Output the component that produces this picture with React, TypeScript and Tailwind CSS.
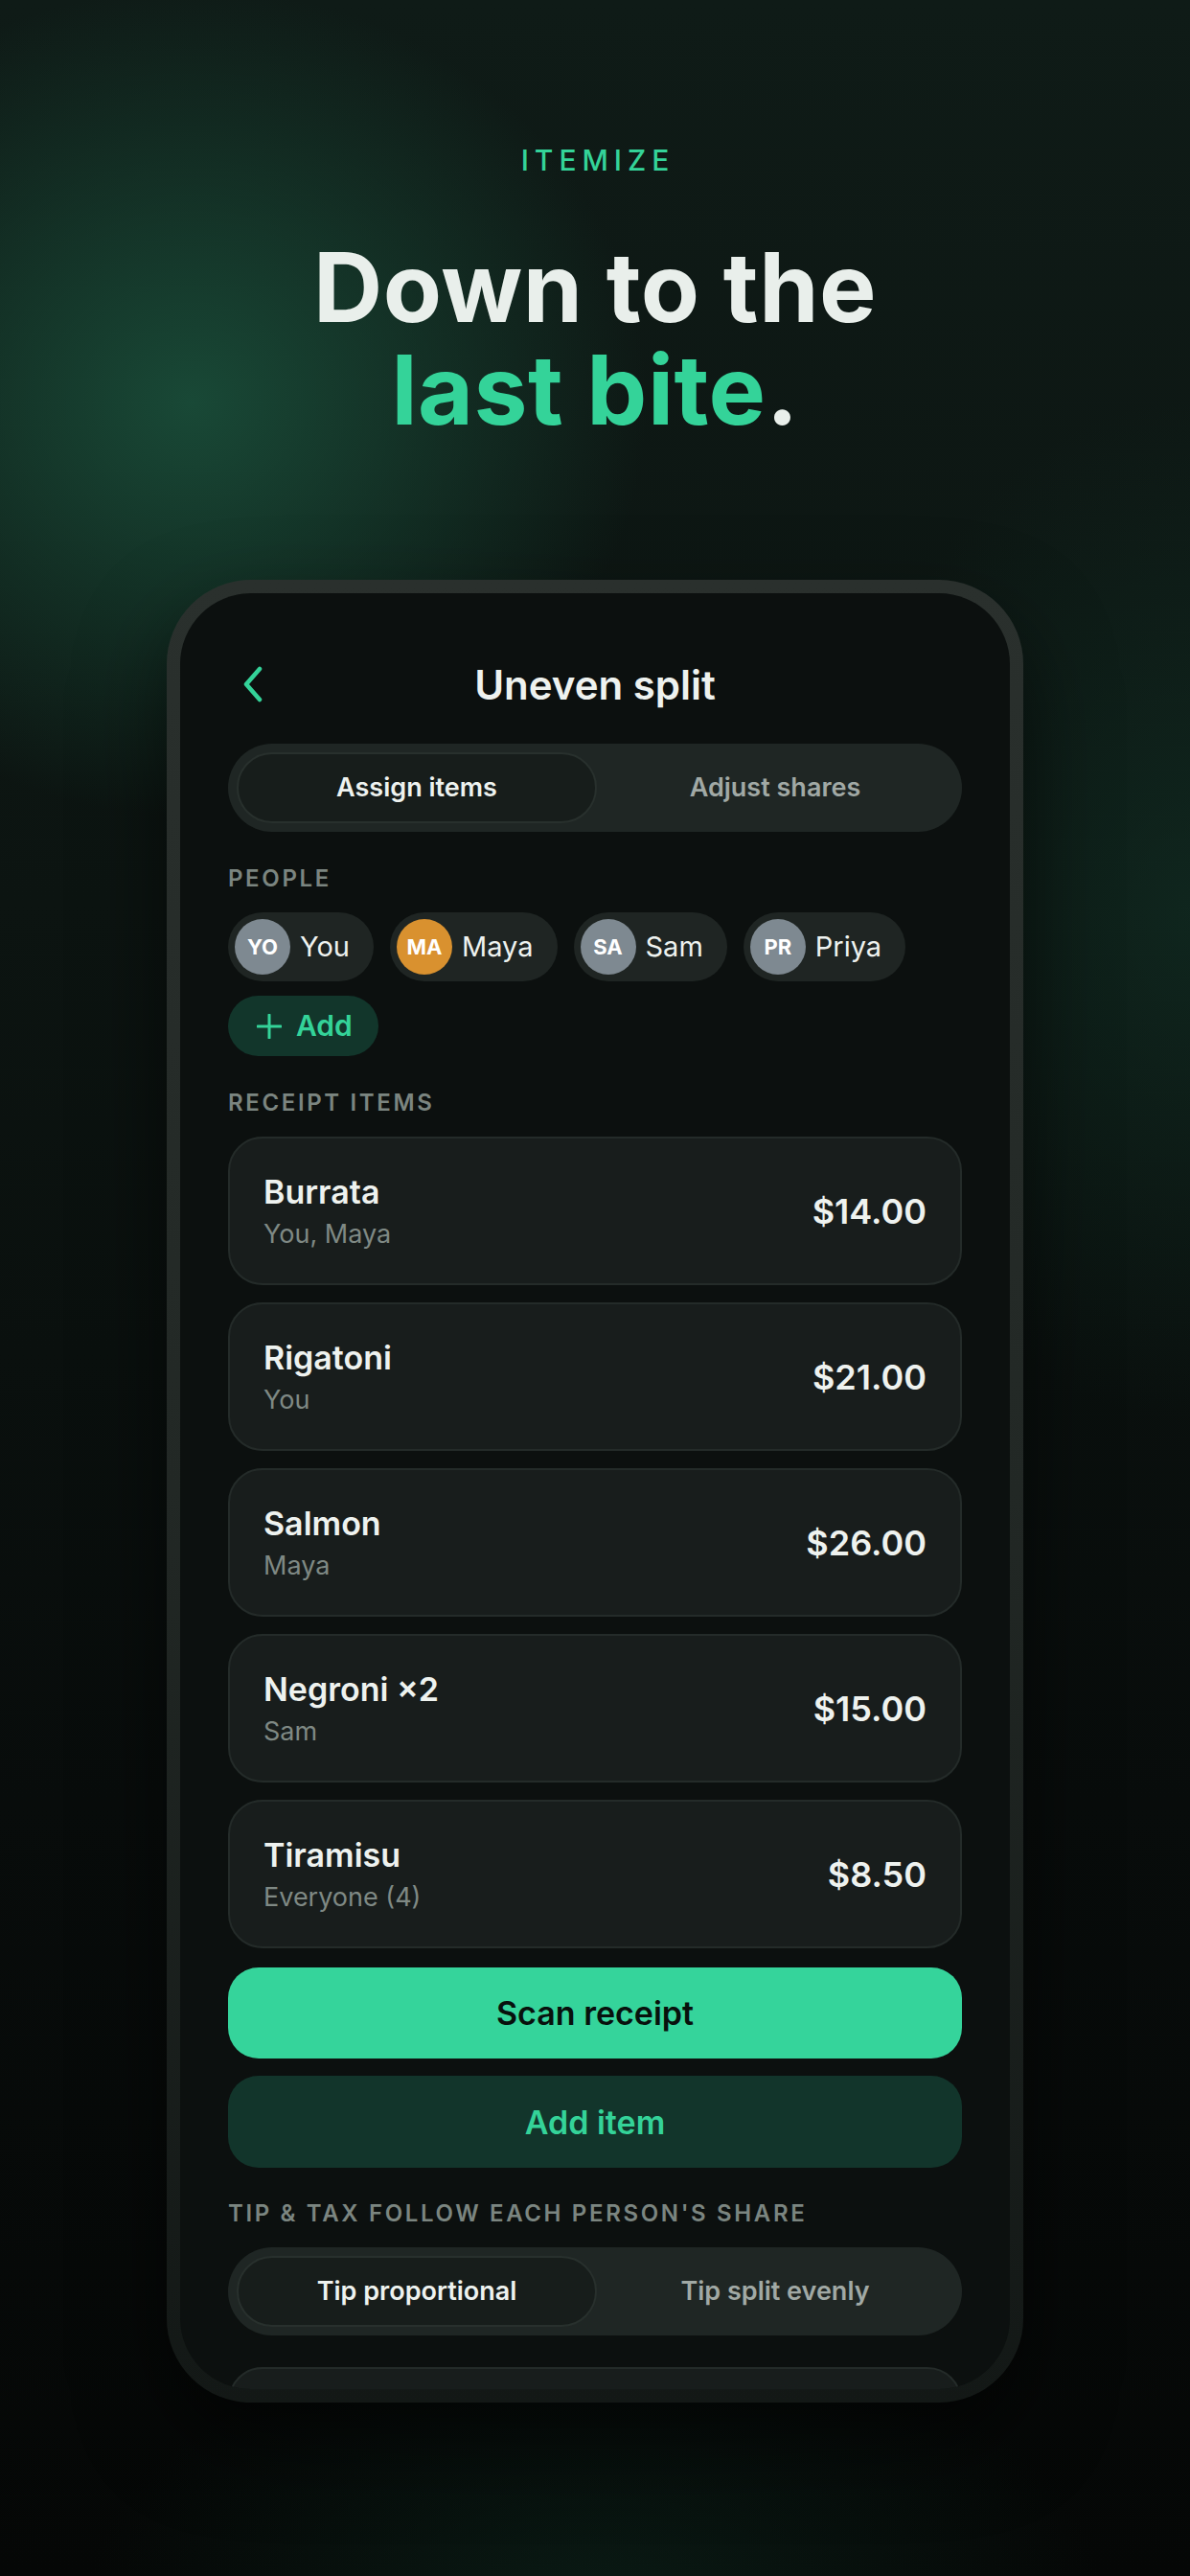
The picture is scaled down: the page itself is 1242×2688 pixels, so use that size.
import clsx from 'clsx';

interface Person {
  initials: string;
  name: string;
  color: string;
}

const people: Person[] = [
  { initials: 'YO', name: 'You', color: 'bg-[#7e8991]' },
  { initials: 'MA', name: 'Maya', color: 'bg-[#d9912f]' },
  { initials: 'SA', name: 'Sam', color: 'bg-[#7e8991]' },
  { initials: 'PR', name: 'Priya', color: 'bg-[#7e8991]' },
];

const items = [
  { name: 'Burrata', who: 'You, Maya', price: '$14.00' },
  { name: 'Rigatoni', who: 'You', price: '$21.00' },
  { name: 'Salmon', who: 'Maya', price: '$26.00' },
  { name: 'Negroni ×2', who: 'Sam', price: '$15.00' },
  { name: 'Tiramisu', who: 'Everyone (4)', price: '$8.50' },
];

function Segmented({ options, active }: { options: string[]; active: number }) {
  return (
    <div className="flex h-[92px] rounded-full bg-[#1f2624] p-[9px]">
      {options.map((opt, i) => (
        <div
          key={opt}
          className={clsx(
            'flex flex-1 items-center justify-center rounded-full text-[27px] font-semibold',
            i === active
              ? 'border-2 border-[#28302d] bg-[#171d1b] text-[#eef2ef]'
              : 'text-[#a1a9a5]'
          )}
        >
          {opt}
        </div>
      ))}
    </div>
  );
}

function SectionLabel({ children, className }: { children: string; className?: string }) {
  return (
    <p className={clsx('text-[24px] font-semibold leading-none tracking-[0.11em] text-[#7b8580]', className)}>
      {children}
    </p>
  );
}

function ItemCard({ name, who, price }: { name: string; who: string; price: string }) {
  return (
    <div className="flex h-[155px] items-center justify-between rounded-[36px] border-2 border-[#242b29] bg-[#181d1c] px-[35px]">
      <div>
        <p className="text-[34px] font-semibold leading-[42px] text-[#eef2ef]">{name}</p>
        <p className="mt-[6px] text-[27px] leading-[34px] text-[#7f8984]">{who}</p>
      </div>
      <p className="text-[36px] font-semibold text-[#eef2ef]">{price}</p>
    </div>
  );
}

function Phone() {
  return (
    <div className="mx-auto mt-[145px] w-[894px] rounded-[88px] bg-[linear-gradient(180deg,#2a302d_0%,#222825_50%,#131816_100%)] p-[14px] shadow-[0_40px_90px_rgba(0,0,0,0.55)]">
      <div className="h-[1874px] overflow-hidden rounded-[74px] bg-[#0c100f] px-[50px]">
        {/* Header */}
        <div className="mt-[63px] grid h-[64px] grid-cols-[1fr_auto_1fr] items-center">
          <div className="pl-[15px]">
            <svg width="22" height="38" viewBox="0 0 22 38" fill="none">
              <path d="M18 3 L4 19 L18 35" stroke="#34d399" strokeWidth="4.5" strokeLinecap="round" strokeLinejoin="round" />
            </svg>
          </div>
          <h2 className="text-[42px] font-semibold text-[#eef2ef]">Uneven split</h2>
          <div />
        </div>

        <div className="mt-[30px]">
          <Segmented options={['Assign items', 'Adjust shares']} active={0} />
        </div>

        {/* People */}
        <SectionLabel className="mt-[37px]">PEOPLE</SectionLabel>
        <div className="mt-[23px] flex flex-wrap gap-x-[17px] gap-y-[15px]">
          {people.map((p) => (
            <div key={p.name} className="flex h-[72px] items-center gap-[10px] rounded-full bg-[#1f2523] pl-[7px] pr-[25px]">
              <div className={clsx('flex h-[58px] w-[58px] items-center justify-center rounded-full text-[22px] font-bold text-white', p.color)}>
                {p.initials}
              </div>
              <span className="text-[29px] text-[#eef2ef]">{p.name}</span>
            </div>
          ))}
          <div className="flex h-[63px] items-center gap-[15px] rounded-full bg-[#12362b] pl-[30px] pr-[27px] text-[#34d399]">
            <svg width="26" height="26" viewBox="0 0 26 26" fill="none">
              <path d="M13 1 V25 M1 13 H25" stroke="#34d399" strokeWidth="3" strokeLinecap="round" />
            </svg>
            <span className="text-[30px] font-semibold">Add</span>
          </div>
        </div>

        {/* Receipt items */}
        <SectionLabel className="mt-[37px]">RECEIPT ITEMS</SectionLabel>
        <div className="mt-[23px] flex flex-col gap-[18px]">
          {items.map((it) => (
            <ItemCard key={it.name} {...it} />
          ))}
        </div>

        <button className="mt-[20px] flex h-[95px] w-full items-center justify-center rounded-[32px] bg-[#35d49b] text-[34px] font-semibold text-[#08110d]">
          Scan receipt
        </button>
        <button className="mt-[18px] flex h-[96px] w-full items-center justify-center rounded-[32px] bg-[#12352b] text-[34px] font-semibold text-[#34d399]">
          Add item
        </button>

        <SectionLabel className="mt-[36px]">TIP &amp; TAX FOLLOW EACH PERSON'S SHARE</SectionLabel>
        <div className="mt-[23px]">
          <Segmented options={['Tip proportional', 'Tip split evenly']} active={0} />
        </div>

        <div className="mt-[33px] h-[155px] rounded-[36px] border-2 border-[#242b29] bg-[#181d1c]" />
      </div>
    </div>
  );
}

export default function App() {
  return (
    <div className="min-h-[2688px] w-full overflow-hidden bg-[#070a09] bg-[image:radial-gradient(ellipse_660px_600px_at_200px_420px,rgba(26,78,58,0.9),transparent_72%),radial-gradient(ellipse_520px_760px_at_1242px_950px,rgba(18,52,40,0.55),transparent_70%),radial-gradient(ellipse_760px_420px_at_621px_2720px,rgba(14,42,32,0.55),transparent_70%),linear-gradient(180deg,#0f1b17_0%,#0c1411_35%,#080c0b_70%,#050706_100%)] pb-[180px] font-['Inter',sans-serif]">
      <div className="flex flex-col items-center pt-[152px]">
        <p className="pl-[0.2em] text-[30px] font-medium leading-none tracking-[0.2em] text-[#34d399]">ITEMIZE</p>
        <h1 className="mt-[64px] text-center text-[100px] font-bold tracking-[0.005em] text-[#e9efeb]">
          <span className="block h-[107px] leading-[107px]">Down to the</span>
          <span className="block h-[107px] leading-[107px]">
            <span className="text-[#34d399]">last bite</span>.
          </span>
        </h1>
      </div>
      <Phone />
    </div>
  );
}
